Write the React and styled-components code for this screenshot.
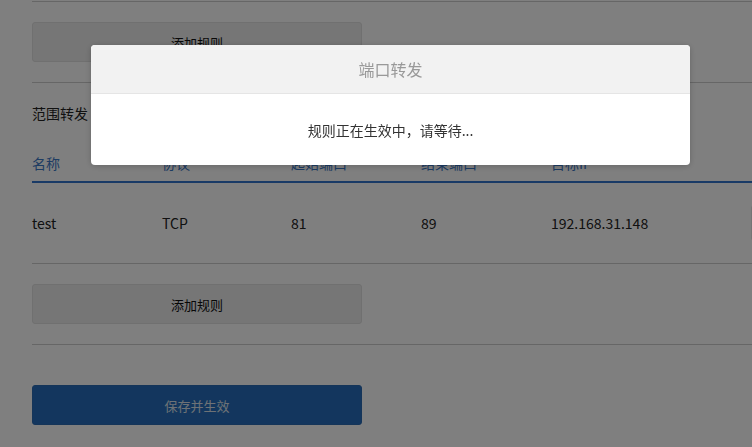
import React from 'react';
import styled, { createGlobalStyle } from 'styled-components';

const GlobalStyle = createGlobalStyle`
    html, body {
        margin: 0;
        padding: 0;
        background: #fff;
        overflow: hidden;
    }
    body {
        font-family: "Noto Sans CJK SC", "Microsoft YaHei", sans-serif;
        font-size: 14px;
        color: #333;
    }
`;

const columns = ['名称', '协议', '起始端口', '结束端口', '目标IP'];

const rules = [{ name: 'test', proto: 'TCP', start: 81, end: 89, ip: '192.168.31.148' }];

const App = () => {
    return (
        <>
            <GlobalStyle />
            <Page>
                <Divider $top={1} />
                <AddButton>添加规则</AddButton>
                <Divider $top={20} />
                <SectionTitle>范围转发</SectionTitle>
                <Table>
                    <HeadRow>
                        {columns.map((c) => (
                            <HeadCell key={c}>{c}</HeadCell>
                        ))}
                        <HeadCell />
                    </HeadRow>
                    {rules.map((r) => (
                        <Row key={r.name}>
                            <Cell>{r.name}</Cell>
                            <Cell>{r.proto}</Cell>
                            <Cell>{r.start}</Cell>
                            <Cell>{r.end}</Cell>
                            <Cell>{r.ip}</Cell>
                            <Cell>
                                <EditButton />
                            </Cell>
                        </Row>
                    ))}
                </Table>
                <AddButton>添加规则</AddButton>
                <Divider $top={20} />
                <SaveButton>保存并生效</SaveButton>
            </Page>

            <Overlay>
                <Dialog>
                    <DialogHead>端口转发</DialogHead>
                    <DialogBody>规则正在生效中，请等待...</DialogBody>
                </Dialog>
            </Overlay>
        </>
    );
};

const Page = styled.div`
    display: flex;
    flex-direction: column;
    padding-left: 32px;
    width: 900px;
`;

const Divider = styled.div`
    margin-top: ${(p) => p.$top}px;
    border-top: 1px solid #cdcdcd;
`;

const AddButton = styled.div`
    margin-top: 20px;
    width: 328px;
    height: 38px;
    display: flex;
    align-items: center;
    justify-content: center;
    background: #ececec;
    border: 1px solid #e0e0e0;
    border-radius: 3px;
    color: #111;
    font-size: 13px;
`;

const SectionTitle = styled.div`
    margin-top: 20px;
    height: 20px;
    line-height: 20px;
    font-size: 14px;
    color: #222;
`;

const Table = styled.div`
    margin-top: 19px;
    display: flex;
    flex-direction: column;
`;

const HeadRow = styled.div`
    display: grid;
    grid-template-columns: 130px 129px 130px 130px 200px 1fr;
    height: 39px;
    border-bottom: 2px solid #3275cc;
`;

const HeadCell = styled.div`
    padding-top: 11px;
    line-height: 20px;
    color: #3c78c6;
    font-size: 14px;
`;

const Row = styled.div`
    display: grid;
    grid-template-columns: 130px 129px 130px 130px 200px 1fr;
    align-items: center;
    height: 80px;
    border-bottom: 1px solid #cdcdcd;
`;

const Cell = styled.div`
    font-size: 14px;
    color: #222;
    line-height: 20px;
`;

const EditButton = styled.div`
    width: 80px;
    height: 34px;
    border: 1px solid #e8e8e8;
    border-radius: 3px;
    background: #fff;
`;

const SaveButton = styled.div`
    margin-top: 40px;
    width: 328px;
    height: 38px;
    display: flex;
    align-items: center;
    justify-content: center;
    background: #266dbd;
    border: 1px solid #2a6ab2;
    border-radius: 3px;
    color: #dde4ec;
    font-size: 13px;
`;

const Overlay = styled.div`
    position: fixed;
    inset: 0;
    background: rgba(0, 0, 0, 0.5);
`;

const Dialog = styled.div`
    position: absolute;
    left: 91px;
    top: 45px;
    width: 599px;
    background: #fff;
    border-radius: 4px;
    overflow: hidden;
    box-shadow: 0 1px 6px rgba(0, 0, 0, 0.2);
`;

const DialogHead = styled.div`
    height: 48px;
    display: flex;
    align-items: center;
    justify-content: center;
    background: #f2f2f2;
    border-bottom: 1px solid #e5e5e5;
    color: #999;
    font-size: 16px;
`;

const DialogBody = styled.div`
    height: 71px;
    display: flex;
    align-items: center;
    justify-content: center;
    color: #333;
    font-size: 14px;
`;

export default App;
